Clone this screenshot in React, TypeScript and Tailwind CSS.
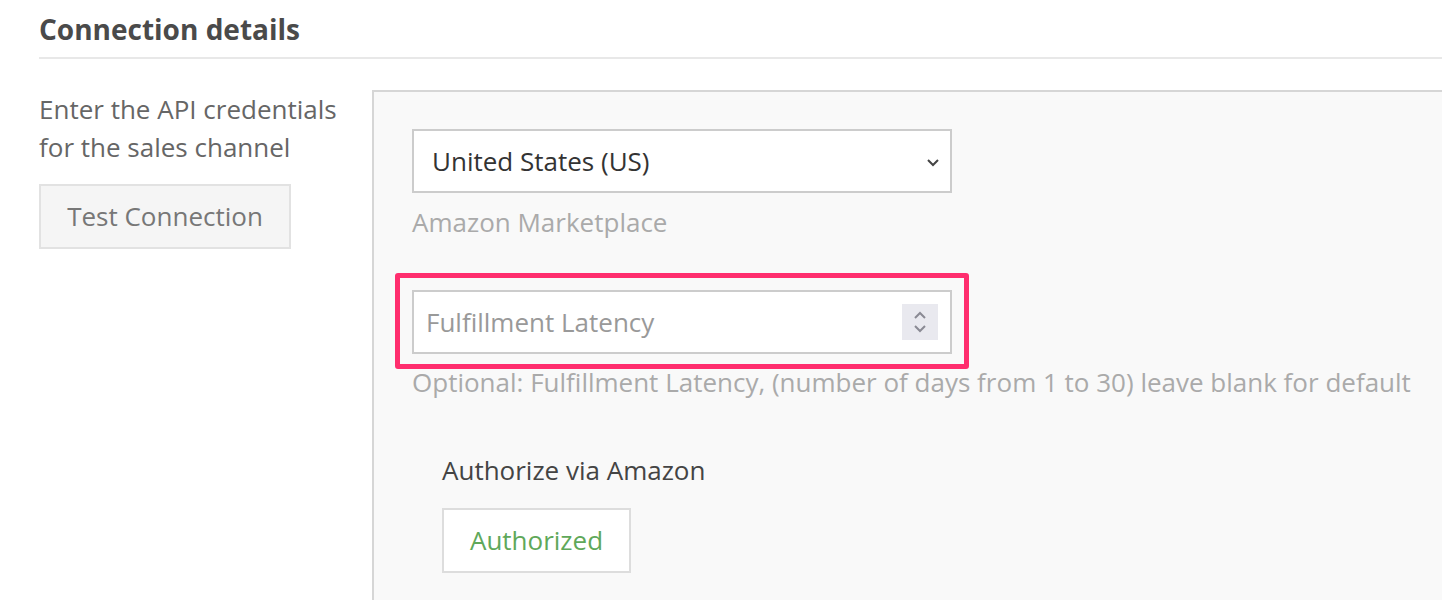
import React from "react";

export default function App() {
  return (
    <div className="w-[1442px] h-[600px] overflow-hidden bg-white" style={{ fontFamily: '"Open Sans", sans-serif' }}>
      <div className="pl-[39px] pt-[11px]">
        <h2 className="text-[28px] font-bold text-[#4a4a4a] leading-[36px]">Connection details</h2>
        <div className="mt-[10px] h-[2px] bg-[#e8e8e8]" />
        <div className="flex mt-[31px]">
          <div className="w-[333px] shrink-0">
            <p className="text-[26px] leading-[38px] text-[#666]">Enter the API credentials<br />for the sales channel</p>
            <button className="mt-[18px] h-[65px] w-[252px] border-2 border-[#e2e2e2] bg-[#f5f5f5] text-[26px] text-[#777]">Test Connection</button>
          </div>
          <div className="flex-1 h-[600px] border-l-2 border-t-2 border-[#d6d6d6] bg-[#f9f9f9] pl-[38px] pt-[37px]">
            <div className="w-[540px] h-[64px] border-2 border-[#cccccc] bg-white flex items-center pl-[18px] pr-[10px]">
              <span className="flex-1 text-[26px] text-[#333]">United States (US)</span>
              <svg width="14" height="10" viewBox="0 0 14 10" className="mt-[2px]"><path d="M2 3 L7 8 L12 3" fill="none" stroke="#444" strokeWidth="2" /></svg>
            </div>
            <div className="mt-[12px] text-[26px] text-[#aaa] leading-[34px]">Amazon Marketplace</div>
            <div className="mt-[34px] -ml-[17px] w-[574px] border-[5px] border-[#ff2e6e] rounded-[3px] pt-[12px] pb-[10px] pl-[12px]">
              <div className="w-[540px] h-[64px] border-2 border-[#cccccc] bg-white flex items-center pl-[12px] pr-[12px]">
                <span className="flex-1 text-[26px] text-[#999]">Fulfillment Latency</span>
                <div className="w-[36px] h-[36px] bg-[#e9e9ef] flex items-center justify-center">
                  <svg width="16" height="26" viewBox="0 0 16 26"><path d="M3 9 L8 4 L13 9" fill="none" stroke="#8a8a94" strokeWidth="2" /><path d="M3 17 L8 22 L13 17" fill="none" stroke="#8a8a94" strokeWidth="2" /></svg>
                </div>
              </div>
            </div>
            <div className="mt-[-4px] text-[26px] text-[#aaa] leading-[34px] whitespace-nowrap">Optional: Fulfillment Latency, (number of days from 1 to 30) leave blank for default</div>
            <div className="pl-[30px] mt-[54px]">
              <div className="text-[26px] text-[#444] leading-[34px]">Authorize via Amazon</div>
              <button className="mt-[21px] h-[65px] w-[189px] border-2 border-[#dddddd] bg-white text-[26px] text-[#5fa85a]">Authorized</button>
            </div>
          </div>
        </div>
      </div>
    </div>
  );
}
